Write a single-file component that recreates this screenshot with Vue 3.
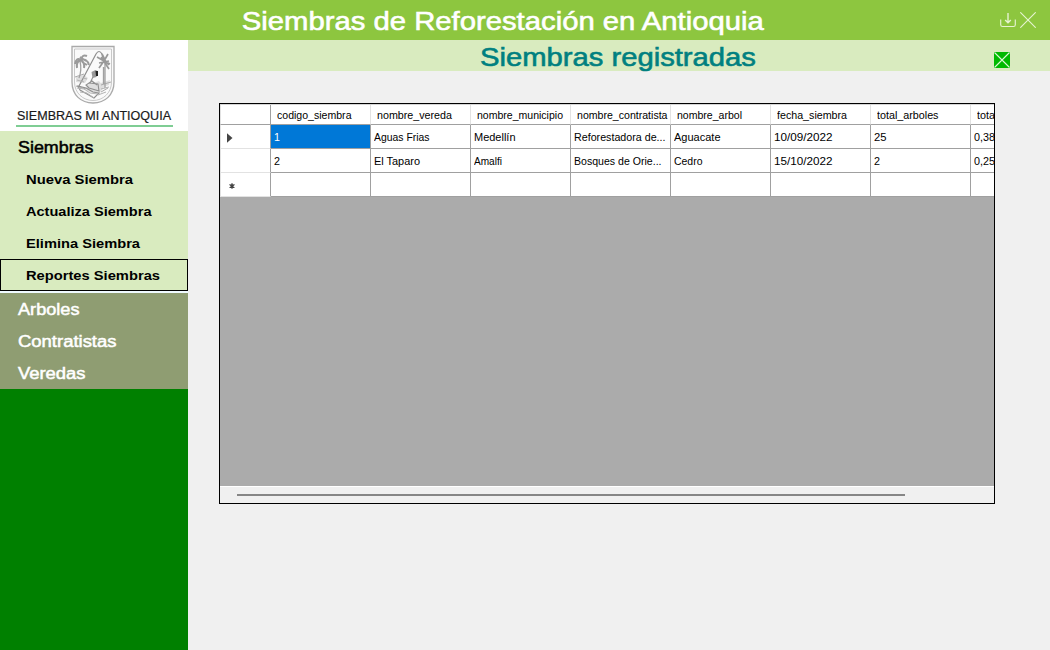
<script setup>
const submenu = [
  { label: 'Nueva Siembra', w: 107 },
  { label: 'Actualiza Siembra', w: 125.5 },
  { label: 'Elimina Siembra', w: 114 },
  { label: 'Reportes Siembras', w: 134 }
]
submenu[3].active = true
const modules = [
  { label: 'Arboles', w: 61.5 },
  { label: 'Contratistas', w: 98.5 },
  { label: 'Veredas', w: 67.5 }
]
const columns = [
  ['codigo_siembra', 74.5],
  ['nombre_vereda', 75],
  ['nombre_municipio', 86],
  ['nombre_contratista', 90.5],
  ['nombre_arbol', 65],
  ['fecha_siembra', 70],
  ['total_arboles', 61.5],
  ['tota', 18]
]
const rows = [
  [['1', 6], ['Aguas Frias', 55.5], ['Medellín', 41.5], ['Reforestadora de...', 91.5], ['Aguacate', 46.5], ['10/09/2022', 58.5], ['25', 12.5], ['0,38', 21]],
  [['2', 6], ['El Taparo', 46], ['Amalfi', 28], ['Bosques de Orie...', 87.5], ['Cedro', 28.5], ['15/10/2022', 58.5], ['2', 6], ['0,25', 21]]
]

// Stretches a label horizontally so that it takes the given width.
const vFit = {
  mounted(el, { value }) {
    el.style.transform = `scaleX(${value / el.getBoundingClientRect().width})`
  }
}
</script>

<template>
  <div class="window">
    <header class="titlebar">
      <h1><span v-fit="522" class="fit mid">Siembras de Reforestación en Antioquia</span></h1>
      <div class="controls">
        <svg width="16" height="16" viewBox="0 0 16 16" fill="none" stroke="#e6f3d2" stroke-width="1.15">
          <path d="M.7 7.500v5.200q0 1.800 1.800 1.800h11q1.800 0 1.800-1.800V7.500" />
          <path d="M8 1v9.500M5.200 8l2.800 2.800L10.800 8" stroke-width="1.400" />
        </svg>
        <svg width="16" height="16" viewBox="0 0 16 16" stroke="#e6f3d2" stroke-width="1.1">
          <path d="M.3.3l15.400 15.400M15.700.3L.3 15.700" />
        </svg>
      </div>
    </header>
    <div class="body">
      <aside>
        <div class="brand">
          <svg class="shield" width="44" height="60" viewBox="0 0 44 60" fill="none">
            <path d="M1 1.500h42V37C43 50 34 58 22 58S1 50 1 37z" fill="#fafafa" stroke="#aaa" stroke-width="1.300" />
            <path d="M3.500 4h37v33C40.500 48 32 55.500 22 55.500S3.500 48 3.500 37z" stroke="#bbb" stroke-width=".8" />
            <path d="M5 32l8-2 4 3-3 5-9-1zM16 40l12-4 5 6-5 7-13-3zM30 38l9-3-1 5-8 3z" fill="#dedede" />
            <path d="M8 41L25 9q3-5 6 0l2 7" stroke="#8e8e8e" stroke-width="1.200" />
            <path d="M4 32l9-3M30 40l10-3M5 41l10 3M30 47l7-4" stroke="#aaa" stroke-width="1" />
            <path d="M10 15q-5-3-6 4M10 15q1-6 6-4M10 15q6-2 8 5M10 15q-5 1-4 8M10 15q4 3 3 8M9 12l6 4M5 17l7-2M11 17l5 3" stroke="#9b9b9b" stroke-width="2" />
            <path d="M9 16q2 9-1 17M34 16v27M32.500 22v17" stroke="#a0a0a0" stroke-width="1.300" />
            <path d="M33 16l-7-4M33 16l4-7M33 16l6 3M33 16l-5 7M30 12l8 8M28 18l10-2M34 18l4 6M31 9l4 8" stroke="#999" stroke-width="1.700" />
            <path d="M20.500 27l4-2 2 1-1 6-4 1z" fill="#999" />
            <path d="M24.500 26h2.500v5h-2z" fill="#222" />
            <path d="M22 32l-3 6 8 1 1 7-10-3-3-3 6-4 5 4M7 41l8 2 7 4 6 1-5 5-7-4-7-4z" stroke="#8f8f8f" stroke-width="1.100" />
            <path d="M6 43l7 1 6 4 8 1M9 47l7 1 7 5M27 50l8-3M30 44l8-2M6 35l7 2M12 33l4 1" stroke="#b4b4b4" stroke-width="1" />
          </svg>
          <div class="name"><span v-fit="154" class="fit">SIEMBRAS MI ANTIOQUIA</span></div>
          <div class="rule"></div>
        </div>
        <nav>
          <div class="menu open">
            <div class="item"><span v-fit="75.5" class="fit">Siembras</span></div>
            <div v-for="s in submenu" :key="s.label" class="item sub" :class="{ active: s.active }">
              <span v-fit="s.w" class="fit">{{ s.label }}</span>
            </div>
          </div>
          <div class="menu closed">
            <div v-for="m in modules" :key="m.label" class="item">
              <span v-fit="m.w" class="fit">{{ m.label }}</span>
            </div>
          </div>
        </nav>
      </aside>
      <main>
        <div class="subtitle">
          <h2><span v-fit="276" class="fit mid">Siembras registradas</span></h2>
          <svg class="close" width="16" height="16" viewBox="0 0 16 16" stroke="#dcf7d5" stroke-width="1.1">
            <rect width="16" height="16" fill="#00b900" stroke="none" />
            <path d="M.5.5l15 15M15.500.5l-15 15" />
          </svg>
        </div>
        <section class="grid">
          <div class="row head">
            <div class="cell handle"></div>
            <div v-for="c in columns" :key="c[0]" class="cell"><span v-fit="c[1]" class="fit">{{ c[0] }}</span></div>
          </div>
          <div v-for="(r, i) in rows" :key="i" class="row">
            <div class="cell handle">
              <svg v-if="i === 0" width="6" height="10" viewBox="0 0 6 10"><path d="M0 .3l5.500 4.700L0 9.700z" fill="#444" /></svg>
            </div>
            <div v-for="(c, j) in r" :key="j" class="cell" :class="{ selected: i === 0 && j === 0 }">
              <span v-fit="c[1]" class="fit">{{ c[0] }}</span>
            </div>
          </div>
          <div class="row">
            <div class="cell handle star">
              <svg width="6" height="6" viewBox="0 0 6 6" stroke="#444" stroke-width="1.300">
                <circle cx="3" cy="3" r="1.700" fill="#444" stroke="none" />
                <path d="M3 .2v5.600M.5 1.500l5 3M5.500 1.500l-5 3" />
              </svg>
            </div>
            <div v-for="c in columns" :key="c[0]" class="cell"></div>
          </div>
          <div class="empty"></div>
          <div class="scroll"><div class="thumb"></div></div>
        </section>
      </main>
    </div>
  </div>
</template>

<style>
body { margin: 0; }
</style>

<style scoped>
* { box-sizing: border-box; }
.window {
  width: 1050px;
  height: 650px;
  display: flex;
  flex-direction: column;
  overflow: hidden;
  background: #f0f0f0;
  font-family: "Liberation Sans", Arial, sans-serif;
}
.fit { display: inline-block; white-space: pre; transform-origin: 0 50%; }
.fit.mid { transform-origin: 50% 50%; }
h1, h2 { margin: 0; font-size: 26.67px; font-weight: 400; line-height: 30px; -webkit-text-stroke: .6px currentColor; }
.titlebar {
  height: 40px;
  flex: none;
  display: flex;
  background: #8dc63f;
  color: #fff;
  padding-left: 188px;
}
h1 { width: 630px; text-align: center; padding-top: 6px; }
.controls { margin-left: auto; display: flex; gap: 4px; padding: 12px 14px 0 0; }
.body { flex: 1; display: flex; min-height: 0; }
aside { width: 188px; flex: none; background: #008000; }
.brand { height: 91px; background: #fff; display: flex; flex-direction: column; }
.shield { margin: 5px 0 0 71px; flex: none; }
.name { margin: 2px 0 0 16.5px; height: 17px; font-size: 13.4px; line-height: 17px; color: #1a1a1a; -webkit-text-stroke: .2px currentColor; }
.rule { margin: 1px 0 0 16px; width: 157px; height: 2px; background: #7fcd94; }
.menu.open { background: #d9ebbf; color: #000; }
.menu.closed { background: #8f9d72; color: #fff; border-top: 2px solid #f0faff; height: 98px; }
.item { height: 32px; line-height: 32px; padding: 1px 0 0 17.5px; font-size: 16px; -webkit-text-stroke: .5px currentColor; }
.item.sub { padding-left: 26px; font-size: 13.33px; font-weight: 700; -webkit-text-stroke: 0; }
.item.active { border: 1px solid #000; padding-left: 25px; line-height: 30px; }
main { flex: 1; min-width: 0; }
.subtitle { height: 31px; background: #d9ebbf; color: #008080; display: flex; }
h2 { flex: none; width: 860px; text-align: center; padding-top: 2px; }
.close { flex: none; margin: 12px 0 0 -54px; }
.grid {
  margin: 32px 0 0 31px;
  width: 776px;
  height: 401px;
  border: 1px solid #000;
  display: flex;
  flex-direction: column;
  overflow: hidden;
  background: #ababab;
  font-size: 11px;
  color: #000;
}
.row { display: flex; flex: none; height: 24px; width: 851px; }
.row.head { height: 21px; border-top: 1px solid #d5d5d5; }
.cell {
  width: 100px;
  flex: none;
  background: #fff;
  border-right: 1px solid #a0a0a0;
  border-bottom: 1px solid #a0a0a0;
  padding: 1px 0 0 3px;
  line-height: 23px;
}
.head .cell { padding: 0 0 0 6px; line-height: 20px; border-right-color: #e2e2e2; }
.cell.handle {
  width: 51px;
  padding: 2px 0 0 6px;
  display: flex;
  align-items: center;
  border-bottom-color: #e2e2e2;
  border-left: 1px solid #e2e2e2;
  border-right-color: #a0a0a0;
}
.head .cell.handle { border-bottom-color: #a0a0a0; }
.cell.star { padding: 3px 0 0 8px; }
.cell.selected { background: #0078d7; color: #fff; }
.empty { flex: 1; }
.scroll { height: 17px; background: #f0f0f0; border-top: 1px solid #fff; padding: 7px 0 0 17px; }
.thumb { width: 668px; height: 2px; background: #868686; }
</style>
